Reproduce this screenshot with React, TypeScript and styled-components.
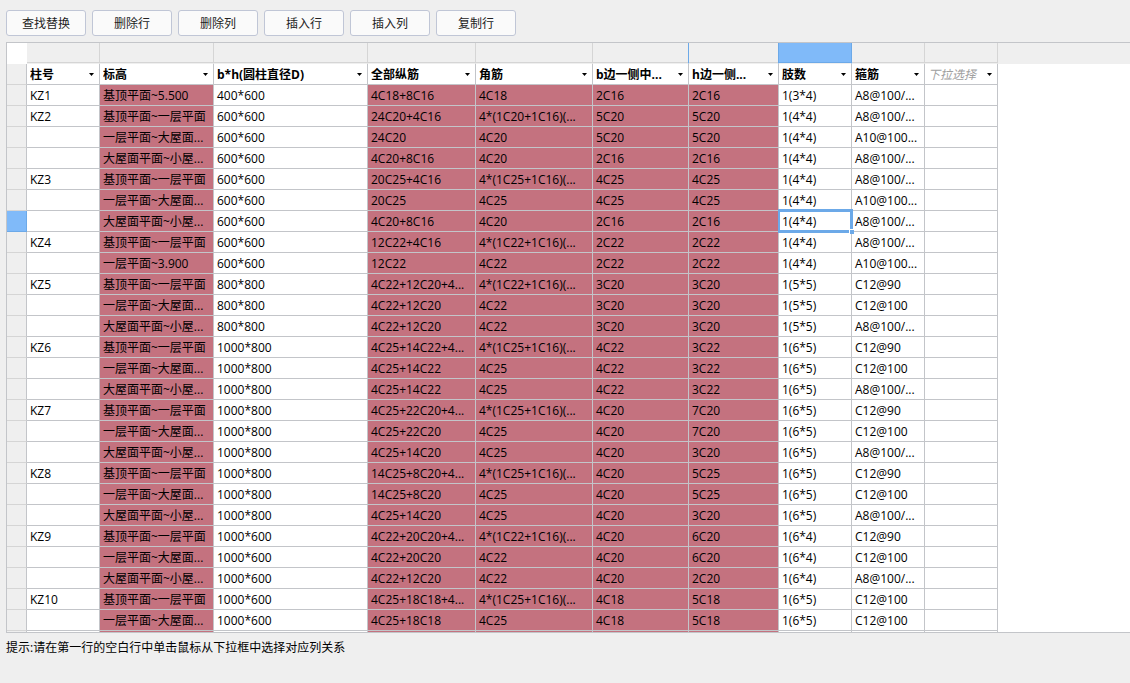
import React from "react";
import styled, { createGlobalStyle, css } from "styled-components";

const GlobalStyle = createGlobalStyle`
  *, *::before, *::after { box-sizing: border-box; }
  body {
    margin: 0;
    background: #efefef;
    color: #000;
    font: 12px/18px "Open Sans", "Noto Sans CJK SC", sans-serif;
  }
`;

const line = "#c3c5c9";
const headLine = "#d5d5d5";
const accent = "#6ca9e8";

const Page = styled.main`
  display: flex;
  flex-direction: column;
  height: 100vh;
  padding: 10px 0 0 6px;
`;

const Toolbar = styled.div`
  display: flex;
  gap: 6px;
  margin-bottom: 6px;
`;

const ToolButton = styled.button`
  width: 80px;
  height: 26px;
  padding: 2px 0 0;
  border: 1px solid #c0c6d6;
  border-radius: 3px;
  background: #fafafa;
  color: #222;
  font: inherit;
`;

const GridView = styled.div`
  flex: 1;
  min-height: 0;
  overflow: hidden;
  border: 1px solid ${line};
  border-right: 0;
  background: #fff;
`;

const Table = styled.table`
  width: 100%;
  table-layout: fixed;
  border-collapse: separate;
  border-spacing: 0;
`;

const Col = styled.col<{ $width?: number }>`
  ${(p) => p.$width && css`width: ${p.$width}px;`}
`;

const Corner = styled.td`
  padding: 0;
  background: #fff;
`;

const ColumnHead = styled.td<{ $active?: boolean; $edge?: boolean; $filler?: boolean }>`
  height: 21px;
  padding: 0;
  background: ${(p) => (p.$active ? "#80baf9" : "#efefef")};
  border-bottom: 1px solid #efefef;
  ${(p) =>
    !p.$filler &&
    css`
      border-right: 1px solid ${p.$active || p.$edge ? accent : headLine};
      box-shadow: inset 0 -1px ${p.$active ? accent : headLine};
    `}
`;

const RowHead = styled.td<{ $active?: boolean }>`
  height: 21px;
  padding: 0;
  background: ${(p) => (p.$active ? "#80baf9" : "#efefef")};
  border-right: 1px solid ${(p) => (p.$active ? accent : line)};
  border-bottom: 1px solid ${(p) => (p.$active ? accent : headLine)};
`;

const FieldHead = styled.th`
  position: relative;
  height: 21px;
  padding: 0;
  border-right: 1px solid ${line};
  border-bottom: 1px solid ${line};
`;

const FieldSelect = styled.select<{ $empty: boolean }>`
  display: block;
  width: 100%;
  height: 20px;
  padding: 2px 16px 0 3px;
  border: 0;
  appearance: none;
  background: transparent;
  color: ${(p) => (p.$empty ? "#a0a0a0" : "#000")};
  font: inherit;
  font-weight: ${(p) => (p.$empty ? 400 : 700)};
  font-style: ${(p) => (p.$empty ? "italic" : "normal")};
`;

const Arrow = styled.svg`
  position: absolute;
  top: 9px;
  right: 5px;
  pointer-events: none;
`;

const Cell = styled.td<{ $marked?: boolean }>`
  position: relative;
  height: 21px;
  padding: 2px 0 0 3px;
  border-right: 1px solid ${line};
  border-bottom: 1px solid ${line};
  background: ${(p) => (p.$marked ? "#c4727f" : "#fff")};
  white-space: nowrap;
`;

const Selection = styled.span`
  position: absolute;
  z-index: 1;
  inset: -2px -2px -2px -1px;
  border: 3px solid ${accent};
  border-left-width: 2px;
  pointer-events: none;

  &::after {
    content: "";
    position: absolute;
    right: -4px;
    bottom: -4px;
    width: 5px;
    height: 5px;
    border: solid #fff;
    border-width: 1px 0 0 1px;
    background: ${accent};
  }
`;

const Hint = styled.p`
  height: 50px;
  margin: 0;
  padding-top: 6px;
`;

const tools = ["查找替换", "删除行", "删除列", "插入行", "插入列", "复制行"];

const fields = [
  { name: "柱号", width: 73 },
  { name: "标高", width: 114, marked: true },
  { name: "b*h(圆柱直径D)", width: 154 },
  { name: "全部纵筋", width: 108, marked: true },
  { name: "角筋", width: 117, marked: true },
  { name: "b边一侧中...", width: 96, marked: true },
  { name: "h边一侧...", width: 90, marked: true },
  { name: "肢数", width: 73 },
  { name: "箍筋", width: 73 },
  { name: "下拉选择", width: 73, empty: true },
];

const BASE = "基顶平面~一层平面";
const MID = "一层平面~大屋面...";
const TOP = "大屋面平面~小屋...";

const rows: string[][] = [
  ["KZ1", "基顶平面~5.500", "400*600", "4C18+8C16", "4C18", "2C16", "2C16", "1(3*4)", "A8@100/...", ""],
  ["KZ2", BASE, "600*600", "24C20+4C16", "4*(1C20+1C16)(...", "5C20", "5C20", "1(4*4)", "A8@100/...", ""],
  ["", MID, "600*600", "24C20", "4C20", "5C20", "5C20", "1(4*4)", "A10@100...", ""],
  ["", TOP, "600*600", "4C20+8C16", "4C20", "2C16", "2C16", "1(4*4)", "A8@100/...", ""],
  ["KZ3", BASE, "600*600", "20C25+4C16", "4*(1C25+1C16)(...", "4C25", "4C25", "1(4*4)", "A8@100/...", ""],
  ["", MID, "600*600", "20C25", "4C25", "4C25", "4C25", "1(4*4)", "A10@100...", ""],
  ["", TOP, "600*600", "4C20+8C16", "4C20", "2C16", "2C16", "1(4*4)", "A8@100/...", ""],
  ["KZ4", BASE, "600*600", "12C22+4C16", "4*(1C22+1C16)(...", "2C22", "2C22", "1(4*4)", "A8@100/...", ""],
  ["", "一层平面~3.900", "600*600", "12C22", "4C22", "2C22", "2C22", "1(4*4)", "A10@100...", ""],
  ["KZ5", BASE, "800*800", "4C22+12C20+4...", "4*(1C22+1C16)(...", "3C20", "3C20", "1(5*5)", "C12@90", ""],
  ["", MID, "800*800", "4C22+12C20", "4C22", "3C20", "3C20", "1(5*5)", "C12@100", ""],
  ["", TOP, "800*800", "4C22+12C20", "4C22", "3C20", "3C20", "1(5*5)", "A8@100/...", ""],
  ["KZ6", BASE, "1000*800", "4C25+14C22+4...", "4*(1C25+1C16)(...", "4C22", "3C22", "1(6*5)", "C12@90", ""],
  ["", MID, "1000*800", "4C25+14C22", "4C25", "4C22", "3C22", "1(6*5)", "C12@100", ""],
  ["", TOP, "1000*800", "4C25+14C22", "4C25", "4C22", "3C22", "1(6*5)", "A8@100/...", ""],
  ["KZ7", BASE, "1000*800", "4C25+22C20+4...", "4*(1C25+1C16)(...", "4C20", "7C20", "1(6*5)", "C12@90", ""],
  ["", MID, "1000*800", "4C25+22C20", "4C25", "4C20", "7C20", "1(6*5)", "C12@100", ""],
  ["", TOP, "1000*800", "4C25+14C20", "4C25", "4C20", "3C20", "1(6*5)", "A8@100/...", ""],
  ["KZ8", BASE, "1000*800", "14C25+8C20+4...", "4*(1C25+1C16)(...", "4C20", "5C25", "1(6*5)", "C12@90", ""],
  ["", MID, "1000*800", "14C25+8C20", "4C25", "4C20", "5C25", "1(6*5)", "C12@100", ""],
  ["", TOP, "1000*800", "4C25+14C20", "4C25", "4C20", "3C20", "1(6*5)", "A8@100/...", ""],
  ["KZ9", BASE, "1000*600", "4C22+20C20+4...", "4*(1C22+1C16)(...", "4C20", "6C20", "1(6*4)", "C12@90", ""],
  ["", MID, "1000*600", "4C22+20C20", "4C22", "4C20", "6C20", "1(6*4)", "C12@100", ""],
  ["", TOP, "1000*600", "4C22+12C20", "4C22", "4C20", "2C20", "1(6*4)", "A8@100/...", ""],
  ["KZ10", BASE, "1000*600", "4C25+18C18+4...", "4*(1C25+1C16)(...", "4C18", "5C18", "1(6*5)", "C12@100", ""],
  ["", MID, "1000*600", "4C25+18C18", "4C25", "4C18", "5C18", "1(6*5)", "C12@100", ""],
  ["", "", "", "", "", "", "", "", "", ""],
];

const selected = { row: 6, column: 7 };

export default function App() {
  return (
    <Page>
      <GlobalStyle />
      <Toolbar>
        {tools.map((name) => (
          <ToolButton key={name} type="button">{name}</ToolButton>
        ))}
      </Toolbar>
      <GridView>
        <Table>
          <colgroup>
            <Col $width={20} />
            {fields.map((f) => (
              <Col key={f.name} $width={f.width} />
            ))}
            <Col />
          </colgroup>
          <thead>
            <tr>
              <Corner />
              {fields.map((f, c) => (
                <ColumnHead key={f.name} $active={c === selected.column} $edge={c === 5 || c === selected.column - 1} />
              ))}
              <ColumnHead $filler />
            </tr>
            <tr>
              <RowHead />
              {fields.map((f) => (
                <FieldHead key={f.name} scope="col">
                  <FieldSelect aria-label={f.name} defaultValue={f.name} $empty={!!f.empty}>
                    <option>{f.name}</option>
                  </FieldSelect>
                  <Arrow width="5" height="3" viewBox="0 0 5 3" aria-hidden="true">
                    <path d="M0 0H5L2.5 3Z" fill="#000" />
                  </Arrow>
                </FieldHead>
              ))}
            </tr>
          </thead>
          <tbody>
            {rows.map((row, r) => (
              <tr key={r}>
                <RowHead $active={r === selected.row} />
                {row.map((text, c) => (
                  <Cell key={c} $marked={fields[c].marked}>
                    {text}
                    {r === selected.row && c === selected.column && <Selection />}
                  </Cell>
                ))}
              </tr>
            ))}
          </tbody>
        </Table>
      </GridView>
      <Hint>提示:请在第一行的空白行中单击鼠标从下拉框中选择对应列关系</Hint>
    </Page>
  );
}
